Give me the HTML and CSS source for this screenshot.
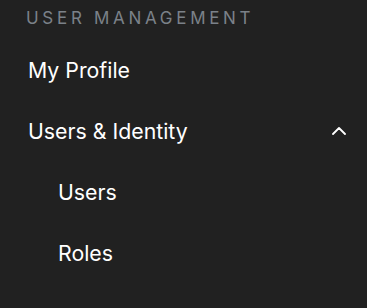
FILE: index.html
```html
<!DOCTYPE html>
<html>
<head>
<meta charset="utf-8">
<link rel="stylesheet" href="styles.css">
</head>
<body>
<nav class="side">
  <div class="heading">USER MANAGEMENT</div>
  <div class="item">My Profile</div>
  <div class="item group">
    <span>Users &amp; Identity</span>
    <svg class="chev" width="14" height="8" viewBox="0 0 14 8"><path d="M1 7 L7 1 L13 7" fill="none" stroke="#fff" stroke-width="1.8" stroke-linecap="round" stroke-linejoin="round"/></svg>
  </div>
  <div class="item sub">Users</div>
  <div class="item sub">Roles</div>
</nav>
</body>
</html>
```
FILE: styles.css
```css
html, body {
  margin: 0;
  padding: 0;
  background: #212121;
}
body {
  width: 367px;
  height: 308px;
  overflow: hidden;
  font-family: Inter, "Noto Sans", sans-serif;
}
.side {
  display: flex;
  flex-direction: column;
}
.heading {
  color: #7b8189;
  font-size: 17px;
  letter-spacing: 3.7px;
  padding: 8px 0 0 26px;
  line-height: 20px;
}
.item {
  color: #ffffff;
  font-size: 21.3px;
  line-height: 24px;
  height: 61px;
  display: flex;
  align-items: center;
  padding-left: 28px;
  padding-right: 21px;
}
.heading + .item {
  margin-top: 11px;
}
.group {
  justify-content: space-between;
}
.sub {
  padding-left: 58px;
}
```
